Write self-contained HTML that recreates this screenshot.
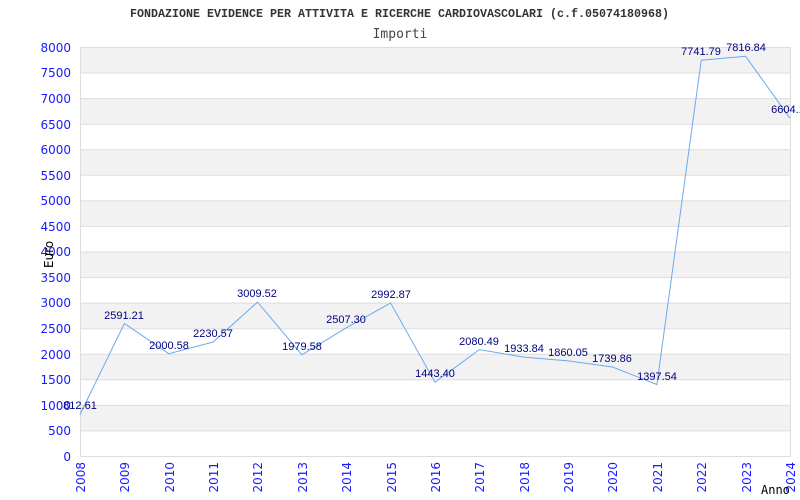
<!DOCTYPE html>
<html><head><style>body{margin:0;background:#fff}svg{display:block}</style></head><body>
<svg width="800" height="500" xmlns="http://www.w3.org/2000/svg">
<text x="130" y="17" textLength="539" lengthAdjust="spacingAndGlyphs" font-family="Liberation Mono,monospace" font-weight="bold" font-size="12" fill="#333">FONDAZIONE EVIDENCE PER ATTIVITA E RICERCHE CARDIOVASCOLARI (c.f.05074180968)</text>
<text x="400" y="38" text-anchor="middle" font-family="DejaVu Sans Mono,monospace" font-size="13" fill="#444">Importi</text>
<g fill="#f2f2f2">
<rect x="80" y="47" width="710" height="25.6"/><rect x="80" y="98.1" width="710" height="25.6"/><rect x="80" y="149.3" width="710" height="25.6"/><rect x="80" y="200.4" width="710" height="25.6"/><rect x="80" y="251.5" width="710" height="25.6"/><rect x="80" y="302.6" width="710" height="25.6"/><rect x="80" y="353.8" width="710" height="25.6"/><rect x="80" y="404.9" width="710" height="25.6"/>
</g>
<g stroke="#ddd" stroke-width="1">
<line x1="80" x2="790" y1="47.5" y2="47.5"/><line x1="80" x2="790" y1="73" y2="73"/><line x1="80" x2="790" y1="98.6" y2="98.6"/><line x1="80" x2="790" y1="124.2" y2="124.2"/><line x1="80" x2="790" y1="149.8" y2="149.8"/><line x1="80" x2="790" y1="175.3" y2="175.3"/><line x1="80" x2="790" y1="200.9" y2="200.9"/><line x1="80" x2="790" y1="226.4" y2="226.4"/><line x1="80" x2="790" y1="252" y2="252"/><line x1="80" x2="790" y1="277.6" y2="277.6"/><line x1="80" x2="790" y1="303.1" y2="303.1"/><line x1="80" x2="790" y1="328.7" y2="328.7"/><line x1="80" x2="790" y1="354.3" y2="354.3"/><line x1="80" x2="790" y1="379.8" y2="379.8"/><line x1="80" x2="790" y1="405.4" y2="405.4"/><line x1="80" x2="790" y1="430.9" y2="430.9"/><line x1="80" x2="790" y1="456.5" y2="456.5"/>
<line x1="80.5" x2="80.5" y1="47" y2="457"/><line x1="790.5" x2="790.5" y1="47" y2="457"/>
</g>
<g font-family="DejaVu Sans,sans-serif" font-size="12" fill="#1a1aff" text-anchor="end">
<text x="71" y="52">8000</text><text x="71" y="77">7500</text><text x="71" y="103">7000</text><text x="71" y="129">6500</text><text x="71" y="154">6000</text><text x="71" y="180">5500</text><text x="71" y="205">5000</text><text x="71" y="231">4500</text><text x="71" y="256">4000</text><text x="71" y="282">3500</text><text x="71" y="307">3000</text><text x="71" y="333">2500</text><text x="71" y="359">2000</text><text x="71" y="384">1500</text><text x="71" y="410">1000</text><text x="71" y="435">500</text><text x="71" y="461">0</text>
</g>
<g font-family="DejaVu Sans,sans-serif" font-size="12" fill="#1a1aff" text-anchor="end">
<text transform="translate(85,462) rotate(-90)">2008</text><text transform="translate(129,462) rotate(-90)">2009</text><text transform="translate(174,462) rotate(-90)">2010</text><text transform="translate(218,462) rotate(-90)">2011</text><text transform="translate(262,462) rotate(-90)">2012</text><text transform="translate(307,462) rotate(-90)">2013</text><text transform="translate(351,462) rotate(-90)">2014</text><text transform="translate(396,462) rotate(-90)">2015</text><text transform="translate(440,462) rotate(-90)">2016</text><text transform="translate(484,462) rotate(-90)">2017</text><text transform="translate(529,462) rotate(-90)">2018</text><text transform="translate(573,462) rotate(-90)">2019</text><text transform="translate(617,462) rotate(-90)">2020</text><text transform="translate(662,462) rotate(-90)">2021</text><text transform="translate(706,462) rotate(-90)">2022</text><text transform="translate(751,462) rotate(-90)">2023</text><text transform="translate(795,462) rotate(-90)">2024</text>
</g>
<text transform="translate(53,268) rotate(-90)" font-family="DejaVu Sans,sans-serif" font-size="12" fill="#000">Euro</text>
<text x="761" y="494" font-family="DejaVu Sans Mono,monospace" font-size="12" fill="#000">Anno</text>
<polyline fill="none" stroke="#6aaaf0" stroke-width="1" points="80,414.4 124.4,323.5 168.75,353.7 213.1,342 257.5,302.1 301.9,354.8 346.25,327.8 390.6,303 435,382.2 479.4,349.6 523.75,357.1 568.1,360.9 612.5,367 656.9,384.5 701.25,60.2 745.6,56.3 790,118.3"/>
<g font-family="Liberation Sans,sans-serif" font-size="11" fill="#000080" text-anchor="middle">
<text x="80" y="409">812.61</text><text x="124" y="319">2591.21</text><text x="169" y="349">2000.58</text><text x="213" y="337">2230.57</text><text x="257" y="297">3009.52</text><text x="302" y="350">1979.58</text><text x="346" y="323">2507.30</text><text x="391" y="298">2992.87</text><text x="435" y="377">1443.40</text><text x="479" y="345">2080.49</text><text x="524" y="352">1933.84</text><text x="568" y="356">1860.05</text><text x="612" y="362">1739.86</text><text x="657" y="380">1397.54</text><text x="701" y="55">7741.79</text><text x="746" y="51">7816.84</text><text x="788" y="113">6604.1</text>
</g>
</svg>
</body></html>
